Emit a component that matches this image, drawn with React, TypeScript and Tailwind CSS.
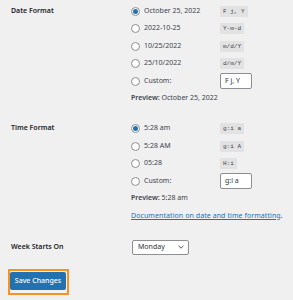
const font = { fontFamily: '"Noto Sans", "Liberation Sans", sans-serif' }

function Radio({ checked }: { checked?: boolean }) {
  return (
    <span className="flex h-[9px] w-[9px] shrink-0 items-center justify-center rounded-full border border-[#8c8f94] bg-white">
      {checked && <span className="h-[5px] w-[5px] rounded-full bg-[#2271b1]" />}
    </span>
  )
}

function Code({ children }: { children: string }) {
  return (
    <code
      className="bg-[#e2e2e3] px-[3px] py-[2px] text-[6px] leading-[7px] text-[#3c434a]"
      style={{ fontFamily: '"Liberation Mono", monospace' }}
    >
      {children}
    </code>
  )
}

function Option({ label, code, checked }: { label: string; code: string; checked?: boolean }) {
  return (
    <div className="flex h-[17.5px] items-center">
      <div className="flex w-[89px] items-center gap-[4px]">
        <Radio checked={checked} />
        <span>{label}</span>
      </div>
      <Code>{code}</Code>
    </div>
  )
}

function Custom({ value }: { value: string }) {
  return (
    <div className="flex h-[17.5px] items-center">
      <div className="flex w-[89px] items-center gap-[4px]">
        <Radio />
        <span>Custom:</span>
      </div>
      <div className="flex h-[16px] w-[32px] items-center rounded-[2px] border border-[#8c8f94] bg-white px-[4px] text-[#2c3338]">
        {value}
      </div>
    </div>
  )
}

function Preview({ text }: { text: string }) {
  return (
    <div className="mt-[3px] leading-[10px]">
      <span className="font-semibold">Preview:</span> {text}
    </div>
  )
}

export default function App() {
  return (
    <div className="h-[300px] w-[293px] overflow-hidden bg-[#f0f0f1] pl-[11px] text-[7px] text-[#3c434a]" style={font}>
      <div className="flex pt-[2.25px]">
        <div className="flex h-[17.5px] w-[120px] items-center font-semibold text-[#1d2327]">Date Format</div>
        <div className="flex flex-col">
          <Option label="October 25, 2022" code="F j, Y" checked />
          <Option label="2022-10-25" code="Y-m-d" />
          <Option label="10/25/2022" code="m/d/Y" />
          <Option label="25/10/2022" code="d/m/Y" />
          <Custom value="F j, Y" />
          <Preview text="October 25, 2022" />
        </div>
      </div>

      <div className="mt-[17px] flex">
        <div className="flex h-[17.5px] w-[120px] items-center font-semibold text-[#1d2327]">Time Format</div>
        <div className="flex flex-col">
          <Option label="5:28 am" code="g:i a" checked />
          <Option label="5:28 AM" code="g:i A" />
          <Option label="05:28" code="H:i" />
          <Custom value="g:i a" />
          <Preview text="5:28 am" />
          <div className="mt-[8px] leading-[10px] tracking-[0.08px]">
            <a className="text-[#2271b1] underline">Documentation on date and time formatting</a>.
          </div>
        </div>
      </div>

      <div className="mt-[19px] flex items-center">
        <div className="w-[121px] font-semibold text-[#1d2327]">Week Starts On</div>
        <div className="flex h-[15px] w-[57px] items-center justify-between rounded-[2px] border border-[#8c8f94] bg-white pl-[5px] pr-[4px] text-[#2c3338]">
          <span>Monday</span>
          <svg width="6" height="4" viewBox="0 0 6 4" fill="none">
            <path d="M0.5 0.8 L3 3.2 L5.5 0.8" stroke="#50575e" strokeWidth="1" />
          </svg>
        </div>
      </div>

      <div className="mt-[14px] ml-[-3px] inline-flex border-2 border-[#f7941d] pt-[1px] pr-[1px] pb-[3px]">
        <button className="h-[18px] w-[56px] rounded-[2px] bg-[#2271b1] text-[7px] font-medium text-white">Save Changes</button>
      </div>
    </div>
  )
}
